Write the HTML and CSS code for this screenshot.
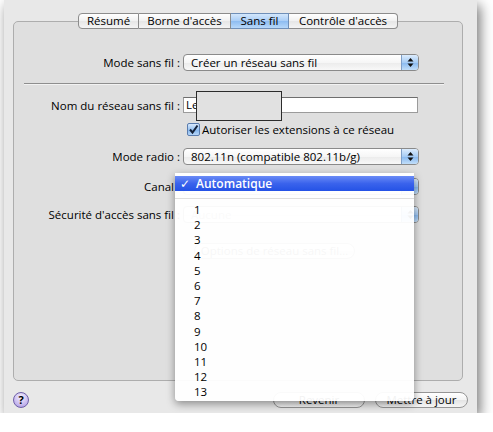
FILE: index.html
```html
<!DOCTYPE html>
<html lang="fr">
<head>
    <meta charset="UTF-8">
    <title>Sans fil</title>
    <link rel="stylesheet" href="styles.css">
</head>
<body>
    <div class="window">
        <div class="tabs">
            <span class="tab tab-resume">Résumé</span>
            <span class="tab tab-borne">Borne d'accès</span>
            <span class="tab tab-sansfil active">Sans fil</span>
            <span class="tab tab-controle">Contrôle d'accès</span>
        </div>

        <div class="panel">
            <div class="row row-mode">
                <span class="label">Mode sans fil :</span>
                <div class="popup">
                    <span class="popup-text">Créer un réseau sans fil</span>
                    <span class="popup-arrows"><svg width="7" height="11" viewBox="0 0 7 11"><polygon points="3.5,1 6.5,4.5 0.5,4.5"/><polygon points="0.5,6.5 6.5,6.5 3.5,10"/></svg></span>
                </div>
            </div>

            <div class="separator"></div>

            <div class="row row-name">
                <span class="label">Nom du réseau sans fil :</span>
                <div class="field">Le<span class="redact"></span></div>
            </div>

            <div class="row row-check">
                <span class="label"></span>
                <div class="checkline">
                    <span class="checkbox"><svg width="11" height="11" viewBox="0 0 11 11"><path d="M2 5.5 L4.5 8.5 L9.5 1.5"/></svg></span>
                    <span>Autoriser les extensions à ce réseau</span>
                </div>
            </div>

            <div class="row row-radio">
                <span class="label">Mode radio :</span>
                <div class="popup">
                    <span class="popup-text">802.11n (compatible 802.11b/g)</span>
                    <span class="popup-arrows"><svg width="7" height="11" viewBox="0 0 7 11"><polygon points="3.5,1 6.5,4.5 0.5,4.5"/><polygon points="0.5,6.5 6.5,6.5 3.5,10"/></svg></span>
                </div>
            </div>

            <div class="row row-canal">
                <span class="label">Canal :</span>
                <div class="popup">
                    <span class="popup-text"></span>
                    <span class="popup-arrows"><svg width="7" height="11" viewBox="0 0 7 11"><polygon points="3.5,1 6.5,4.5 0.5,4.5"/><polygon points="0.5,6.5 6.5,6.5 3.5,10"/></svg></span>
                </div>
            </div>

            <div class="row row-security">
                <span class="label">Sécurité d'accès sans fil :</span>
                <div class="popup">
                    <span class="popup-text dim">Aucune</span>
                    <span class="popup-arrows"><svg width="7" height="11" viewBox="0 0 7 11"><polygon points="3.5,1 6.5,4.5 0.5,4.5"/><polygon points="0.5,6.5 6.5,6.5 3.5,10"/></svg></span>
                </div>
            </div>

            <div class="row row-options">
                <span class="label"></span>
                <span class="button options">Options de réseau sans fil…</span>
            </div>
        </div>

        <div class="footer">
            <span class="help">?</span>
            <div class="actions">
                <span class="button btn-revert">Revenir</span>
                <span class="button btn-update">Mettre à jour</span>
            </div>
        </div>

        <!-- open channel menu -->
        <div class="menu">
            <div class="menu-selected"><span class="tick">✓</span>Automatique</div>
            <div class="menu-divider"></div>
            <div class="menu-item">1</div>
            <div class="menu-item">2</div>
            <div class="menu-item">3</div>
            <div class="menu-item">4</div>
            <div class="menu-item">5</div>
            <div class="menu-item">6</div>
            <div class="menu-item">7</div>
            <div class="menu-item">8</div>
            <div class="menu-item">9</div>
            <div class="menu-item">10</div>
            <div class="menu-item">11</div>
            <div class="menu-item">12</div>
            <div class="menu-item">13</div>
        </div>
    </div>
</body>
</html>
```

FILE: styles.css
```css
body {
    margin: 0;
    background: #fff;
    font-family: "Open Sans", "DejaVu Sans", sans-serif;
    font-size: 11.5px;
    line-height: 15px;
    color: #000;
}
.window {
    position: relative;
    margin-left: 4px;
    width: 473px;
    height: 413px;
    box-sizing: border-box;
    padding: 13px 9px 0;
    background: #e8e8e8;
    box-shadow: 3px 5px 12px rgba(0, 0, 0, 0.55);
}
.tabs {
    position: relative;
    z-index: 1;
    display: flex;
    justify-content: center;
    width: 450px;
    height: 16px;
    margin-bottom: -8px;
}
.tab {
    box-sizing: border-box;
    height: 16px;
    line-height: 14px;
    text-align: center;
    border: 1px solid #8c8c8c;
    border-left: none;
    background: linear-gradient(#ffffff, #f1f1f1 50%, #e6e6e6 51%, #f4f4f4);
}
.tab:first-child {
    border-left: 1px solid #8c8c8c;
    border-radius: 4px 0 0 4px;
}
.tab:last-child {
    border-radius: 0 4px 4px 0;
}
.tab.active {
    background: linear-gradient(#d3e7fc, #a9cdf6 50%, #8dbcf1 51%, #b7d8fa);
    border-color: #6f8fb8;
}
.tab-resume { width: 61px; }
.tab-borne { width: 92px; }
.tab-sansfil { width: 58px; }
.tab-controle { width: 109px; }

.panel {
    box-sizing: border-box;
    width: 450px;
    height: 360px;
    padding-top: 32px;
    border: 1px solid #adadad;
    border-radius: 5px;
    background: #dfdfdf;
}
.row {
    display: flex;
    align-items: center;
    gap: 3px;
}
.label {
    width: 166px;
    flex: none;
    text-align: right;
}
.row-name { margin-top: 12px; }
.row-check { margin-top: 9px; }
.row-radio { margin-top: 11px; }
.row-canal { margin-top: 13px; }
.row-security { margin-top: 11px; }
.row-options { margin-top: 20px; }

.separator {
    height: 1px;
    margin: 12px 18px 0 10px;
    background: #8e8e8e;
    border-bottom: 1px solid #f2f2f2;
}
.popup {
    box-sizing: border-box;
    display: flex;
    width: 236px;
    height: 17px;
    border: 1px solid #8a8a8a;
    border-radius: 4px;
    background: linear-gradient(#ffffff, #f6f6f6 50%, #ebebeb 51%, #f8f8f8);
    overflow: hidden;
}
.popup-text {
    flex: 1;
    padding-left: 7px;
    line-height: 15px;
}
.popup-text.dim {
    color: #9a9a9a;
}
.popup-arrows {
    width: 16px;
    display: flex;
    align-items: center;
    justify-content: center;
    border-left: 1px solid #7f9fc8;
    background: linear-gradient(#dcecfd, #a6ccf5 50%, #86b8f0 51%, #c2def9);
}
.popup-arrows svg {
    fill: #111;
}
.field {
    position: relative;
    box-sizing: border-box;
    width: 235px;
    height: 16px;
    padding-left: 2px;
    line-height: 14px;
    background: #fff;
    border: 1px solid #9b9b9b;
    border-top-color: #6e6e6e;
}
.redact {
    position: absolute;
    left: 12px;
    top: -7px;
    width: 86px;
    height: 30px;
    box-sizing: border-box;
    background: #e1e1e1;
    border: 1px solid #2c2c2c;
}
.checkline {
    display: flex;
    align-items: center;
    gap: 2px;
    margin-left: 4px;
}
.checkbox {
    box-sizing: border-box;
    display: flex;
    align-items: center;
    justify-content: center;
    width: 13px;
    height: 13px;
    border: 1px solid #5a7cae;
    border-radius: 2px;
    background: linear-gradient(#d8e9fc, #9cc5f2 50%, #7fb2ec 51%, #b6d6f8);
}
.checkbox svg path {
    fill: none;
    stroke: #16233a;
    stroke-width: 2;
}
.button {
    box-sizing: border-box;
    height: 16px;
    line-height: 14px;
    text-align: center;
    border: 1px solid #959595;
    border-radius: 8px;
    background: linear-gradient(#ffffff, #f3f3f3 50%, #e4e4e4 51%, #f5f5f5);
}
.options {
    width: 161px;
    margin-left: 11px;
    color: #555;
}

.footer {
    display: flex;
    align-items: center;
    justify-content: space-between;
    margin-top: 11px;
    height: 16px;
}
.help {
    box-sizing: border-box;
    width: 16px;
    height: 16px;
    border-radius: 50%;
    border: 1px solid #6e5fa8;
    background: radial-gradient(circle at 50% 30%, #f4effe, #c9bbef 60%, #a290dc);
    font-weight: bold;
    font-size: 11px;
    line-height: 14px;
    text-align: center;
}
.actions {
    display: flex;
    gap: 10px;
}
.btn-revert { width: 92px; }
.btn-update { width: 93px; }

.menu {
    position: absolute;
    left: 171px;
    top: 173px;
    width: 239px;
    height: 228px;
    box-sizing: border-box;
    padding-top: 3px;
    background: rgba(255, 255, 255, 0.95);
    border-radius: 0 0 4px 4px;
    box-shadow: 0 3px 9px rgba(0, 0, 0, 0.4);
}
.menu-selected {
    height: 15px;
    padding-left: 5px;
    color: #fff;
    font-size: 12px;
    font-weight: 600;
    background: linear-gradient(#6a8bf6, #3a63ec 50%, #2452e6);
}
.tick {
    margin-right: 6px;
}
.menu-divider {
    height: 1px;
    margin-top: 7px;
    background: #dedede;
}
.menu-item {
    padding-left: 19px;
    line-height: 15.2px;
}
.menu-divider + .menu-item {
    margin-top: 3px;
}
```
